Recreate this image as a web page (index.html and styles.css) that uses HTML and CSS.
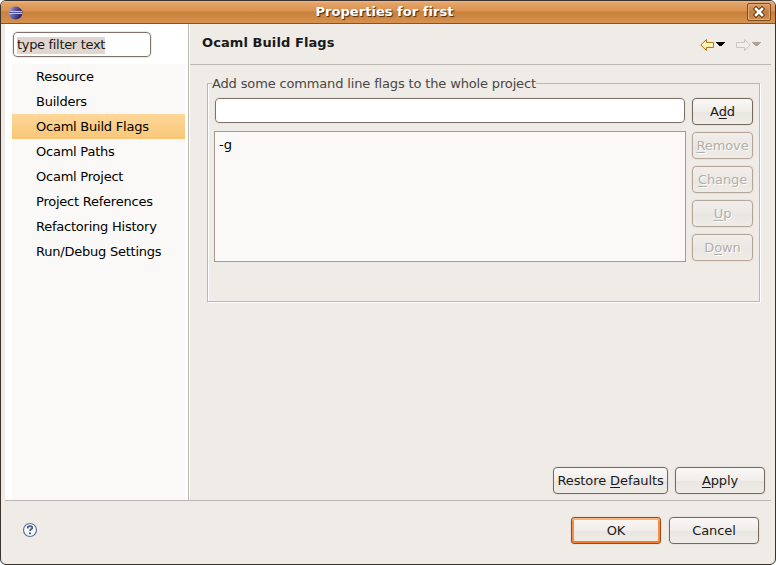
FILE: index.html
```html
<!DOCTYPE html>
<html lang="en">
<head>
<meta charset="utf-8">
<title>Properties for first</title>
<link rel="stylesheet" href="styles.css">
</head>
<body>
<div class="window">
  <header class="titlebar">
    <svg class="app-icon" width="15" height="14" viewBox="0 0 15 14">
      <defs>
        <linearGradient id="globe" x1="0" y1="0" x2="1" y2="0.3">
          <stop offset="0" stop-color="#c4b8cc"/><stop offset=".45" stop-color="#6562a8"/><stop offset="1" stop-color="#26236e"/>
        </linearGradient>
      </defs>
      <ellipse cx="7.5" cy="7" rx="7" ry="6.500" fill="url(#globe)"/>
      <path d="M2 5.500h12M1 7.500h13.500" stroke="#b4c6ea"/>
      <path d="M1 6.500h13" stroke="#4b55a0"/>
    </svg>
    <h1 class="title">Properties for first</h1>
    <button class="close" aria-label="Close">
      <svg width="12" height="12" viewBox="0 0 12 12">
        <path d="M3 3l6 6M9 3l-6 6" stroke="#69401c" stroke-width="4.600" stroke-linecap="square"/>
        <path d="M3 3l6 6M9 3l-6 6" stroke="#fff" stroke-width="2.500" stroke-linecap="square"/>
      </svg>
    </button>
  </header>
  <div class="content">
    <nav class="sidebar">
      <div class="filter"><span class="selected-text">type filter text</span></div>
      <ul class="tree">
        <li>Resource</li>
        <li>Builders</li>
        <li class="active">Ocaml Build Flags</li>
        <li>Ocaml Paths</li>
        <li>Ocaml Project</li>
        <li>Project References</li>
        <li>Refactoring History</li>
        <li>Run/Debug Settings</li>
      </ul>
    </nav>
    <main class="page">
      <div class="page-head">
        <h2>Ocaml Build Flags</h2>
        <svg class="history" width="64" height="14" viewBox="0 0 64 14">
          <defs>
            <linearGradient id="gold" x1="0" y1="0" x2="0" y2="1">
              <stop offset="0" stop-color="#fffbe0"/><stop offset=".5" stop-color="#fff6c4"/><stop offset="1" stop-color="#fbd563"/>
            </linearGradient>
          </defs>
          <path d="M.8 7L6.500 1.500V4.500H13.500V9.500H6.500V12.500Z" fill="url(#gold)" stroke="#b5790f"/>
          <path d="M16 4h9v1h-1v1h-1v1h-1v1h-3v-1h-1v-1h-1v-1h-1z" fill="#000"/>
          <path d="M50.200 7L44.500 1.500V4.500H36.500V9.500H44.500V12.500Z" fill="#f1eeea" stroke="#cbc7c1"/>
          <path d="M52 4h9v1h-1v1h-1v1h-1v1h-3v-1h-1v-1h-1v-1h-1z" fill="#b0a392"/>
        </svg>
      </div>
      <fieldset class="group">
        <legend>Add some command line flags to the whole project</legend>
        <div class="fields">
          <input class="entry" type="text" aria-label="Flag">
          <div class="list">-g</div>
        </div>
        <div class="actions">
          <button class="btn"><span>A<u>d</u>d</span></button>
          <button class="btn" disabled><span><u>R</u>emove</span></button>
          <button class="btn" disabled><span><u>C</u>hange</span></button>
          <button class="btn" disabled><span><u>U</u>p</span></button>
          <button class="btn" disabled><span>D<u>o</u>wn</span></button>
        </div>
      </fieldset>
      <div class="page-buttons">
        <button class="btn restore"><span>Restore <u>D</u>efaults</span></button>
        <button class="btn"><span><u>A</u>pply</span></button>
      </div>
    </main>
  </div>
  <footer class="footer">
    <svg class="help" width="16" height="16" viewBox="0 0 16 16">
      <circle cx="8" cy="8" r="6.500" fill="#f8fafc" stroke="#5a7396" stroke-width="1.200"/>
      <path d="M5.800 6.500V5.800C5.800 4.600 6.700 4.100 8 4.100s2.300.7 2.300 1.800S8 7.200 8 9.100" fill="none" stroke="#3f5785" stroke-width="1.700"/>
      <path d="M7 10.500h2v1.700H7z" fill="#3f5785"/>
    </svg>
    <button class="btn default"><span>OK</span></button>
    <button class="btn"><span>Cancel</span></button>
  </footer>
</div>
</body>
</html>
```
FILE: styles.css
```css
* { box-sizing: border-box; }

body {
  margin: 0;
  background: #fff;
  color: #1a1a1a;
  font: 13px/16px "DejaVu Sans", sans-serif;
}

.window {
  display: flex;
  flex-direction: column;
  width: 776px;
  height: 565px;
  overflow: hidden;
  background: #efebe7;
  border: 1px solid #3a322d;
  border-radius: 6px;
}

.titlebar {
  display: grid;
  grid-template-columns: 30px 1fr 30px;
  align-items: center;
  flex: none;
  height: 23px;
  padding: 0 3px 0 7px;
  background: linear-gradient(#f0b886 0, #e4a468 2px, #d9914f 10px, #c8803a 11px, #d58e4a 20px, #d89350 22px);
  border-bottom: 1px solid #84542a;
}

.app-icon { margin-top: 1px; }

.title {
  margin: 0 11px 0 0;
  color: #fff;
  font-size: 13px;
  letter-spacing: 0.04px;
  line-height: 22px;
  text-align: center;
  text-shadow: 1px 1px 1px #3c2814;
}

.close {
  display: flex;
  align-items: center;
  justify-content: center;
  justify-self: end;
  width: 24px;
  height: 18px;
  margin-right: 1px;
  padding: 0;
  background: linear-gradient(#dca06a, #c57f3d 50%, #d18b49);
  border: 1px solid #794c25;
  border-radius: 2px;
  box-shadow: inset 0 0 0 1px #e0aa78;
}

.content {
  display: flex;
  flex: none;
  height: 477px;
  margin: 0 4px;
  border-bottom: 1px solid #bbb7b3;
}

.sidebar {
  display: flex;
  flex-direction: column;
  width: 184px;
  padding: 7px 3px 0 7px;
  background: #fff;
  border-right: 1px solid #bbb7b3;
}

.filter {
  width: 138px;
  height: 25px;
  margin: 1px;
  padding: 4px 3px;
  background: #fff;
  border: 1px solid #807269;
  border-radius: 4px;
  outline: 1px solid #eeeae6;
  letter-spacing: -0.32px;
}

.selected-text {
  display: inline-block;
  height: 17px;
  background: #e0d6cf;
}

.tree {
  flex: 1;
  margin: 6px 0 0;
  padding: 0;
  list-style: none;
  background: #faf9f7;
}

.tree li {
  height: 25px;
  padding-left: 24px;
  color: #000;
  letter-spacing: -0.23px;
  line-height: 25px;
}

.tree .active { background: linear-gradient(#ffd799, #f8c677); }

.page {
  display: flex;
  flex-direction: column;
  flex: 1;
  border-left: 1px solid #fff;
}

.page-head {
  display: flex;
  justify-content: space-between;
  height: 41px;
  padding: 10px 7px 0 12px;
  border-bottom: 1px solid #bbb7b3;
}

.page-head h2 {
  margin: 0;
  font-size: 13px;
  letter-spacing: 0.08px;
  line-height: 17px;
}

.history { margin-top: 4px; }

.group {
  display: flex;
  gap: 6px;
  height: 227px;
  margin: 10px 11px 0 17px;
  padding: 6px 6px 0;
  border: 1px solid #bbb7b3;
  box-shadow: 1px 1px 0 #fff, inset 1px 0 0 #fff;
}

.group legend {
  height: 17px;
  margin-left: -2px;
  padding: 0;
  color: #4a4744;
  letter-spacing: -0.15px;
  line-height: 17px;
}

.fields {
  display: flex;
  flex-direction: column;
  gap: 8px;
  width: 472px;
}

.entry {
  width: 470px;
  height: 25px;
  margin-left: 1px;
  background: #fff;
  border: 1px solid #807269;
  border-radius: 4px;
  outline: 1px solid #e8e3de;
}

.list {
  height: 131px;
  padding: 5px 4px;
  background: #faf9f7;
  border: 1px solid #a6998d;
  color: #000;
}

.actions {
  display: flex;
  flex-direction: column;
  flex: none;
  gap: 7px;
  width: 61px;
}

.btn {
  flex: none;
  height: 27px;
  padding: 0;
  background: linear-gradient(#faf8f6, #f0edea 50%, #eae6e2 52%, #efece8);
  border: 1px solid #75695e;
  border-radius: 4px;
  color: #1a1a1a;
  font: inherit;
  letter-spacing: -0.1px;
  box-shadow: 0 0 0 1px #e7e2dd;
}

.btn u {
  text-decoration-skip-ink: none;
  text-decoration-thickness: 1px;
  text-underline-offset: 2px;
}

.btn:disabled {
  background: linear-gradient(#f1edea, #ece8e4 50%, #e9e5e1 52%, #efebe7);
  border-color: #b5a699;
  color: #b2aea9;
  text-shadow: 1px 1px 0 #fff;
}

.page-buttons {
  display: flex;
  justify-content: flex-end;
  gap: 7px;
  margin: auto 6px 6px 0;
}

.page-buttons .btn { width: 90px; }
.page-buttons .restore { width: 115px; }

.footer {
  display: flex;
  gap: 8px;
  padding: 16px 16px 0 21px;
}

.footer .btn { width: 90px; }

.help { margin: 5px auto 0 0; }

.footer .default {
  border-color: #a04a18;
  border-radius: 3px;
  box-shadow: inset 0 2px 0 #ffb07a, inset 0 -2px 0 #f57a2a, inset 2px 0 0 #f88c45, inset -2px 0 0 #f88c45, 0 0 0 1px #e7e2dd;
}
```
